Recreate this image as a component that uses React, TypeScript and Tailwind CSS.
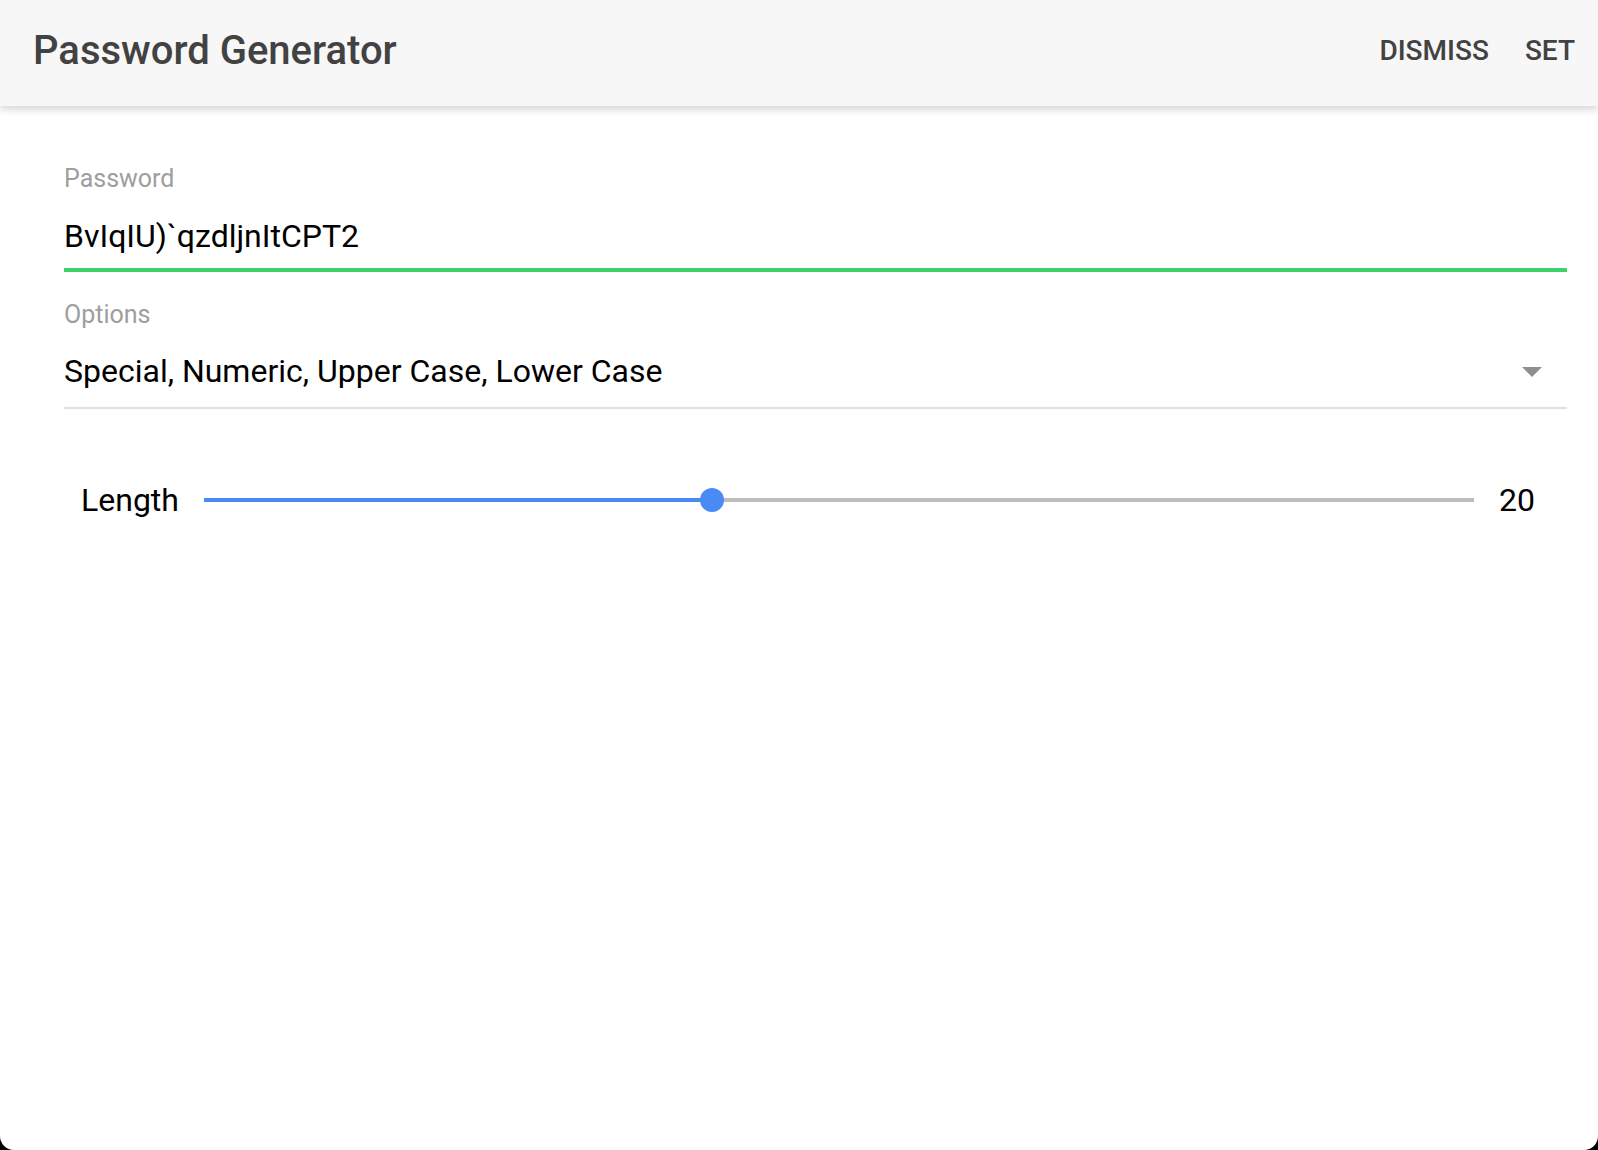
import { useState } from "react";

const MIN = 0;
const MAX = 50;

function LengthSlider({ value }: { value: number }) {
  const pct = ((value - MIN) / (MAX - MIN)) * 100;
  return (
    <div className="relative flex-1 h-[24px] flex items-center">
      <div className="h-[4px] w-full bg-[#bdbdbd]" />
      <div className="absolute left-0 top-[10px] h-[4px] bg-[#4a8af4]" style={{ width: `${pct}%` }} />
      <div
        className="absolute top-0 h-[24px] w-[24px] -ml-[12px] rounded-full bg-[#4a8af4]"
        style={{ left: `${pct}%` }}
      />
    </div>
  );
}

export default function App() {
  const [length] = useState(20);

  return (
    <div className="bg-black min-h-[1150px]" style={{ fontFamily: "Roboto, 'Noto Sans', sans-serif" }}>
      <div className="h-[1150px] bg-white rounded-b-[14px] overflow-hidden">
        <div className="relative z-10 h-[106px] bg-[#f7f7f7] shadow-[0_3px_8px_rgba(0,0,0,0.18)] flex justify-between items-start pl-[33px] pr-[23px]">
          <h1 className="mt-[31px] text-[40px] leading-[40px] font-medium text-[#424242]">Password Generator</h1>
          <div className="mt-[37px] flex gap-[36px] text-[28px] leading-[28px] font-medium text-[#424242]">
            <button>DISMISS</button>
            <button>SET</button>
          </div>
        </div>

        <div className="pl-[64px] pr-[31px] pt-[60px]">
          <div className="text-[25px] leading-[25px] text-[#9e9e9e]">Password</div>
          <div className="mt-[29px] text-[32px] leading-[32px] text-black">BvIqIU)`qzdljnItCPT2</div>
          <div className="mt-[16px] h-[4px] bg-[#40d06a]" />

          <div className="mt-[30px] text-[25px] leading-[25px] text-[#9e9e9e]">Options</div>
          <div className="mt-[28px] flex items-center justify-between pr-[25px]">
            <span className="text-[32px] leading-[32px] text-black">
              Special, Numeric, Upper Case, Lower Case
            </span>
            <svg width="20" height="10" viewBox="0 0 20 10" className="mt-[2px]">
              <path d="M0 0 L20 0 L10 10 Z" fill="#8f8f8f" />
            </svg>
          </div>
          <div className="mt-[20px] h-[2px] bg-[#e0e0e0]" />

          <div className="mt-[67px] h-[48px] flex items-center gap-[25px] pl-[17px] pr-[32px]">
            <span className="text-[32px] leading-[32px] text-black">Length</span>
            <LengthSlider value={length} />
            <span className="text-[32px] leading-[32px] text-black">{length}</span>
          </div>
        </div>
      </div>
    </div>
  );
}
